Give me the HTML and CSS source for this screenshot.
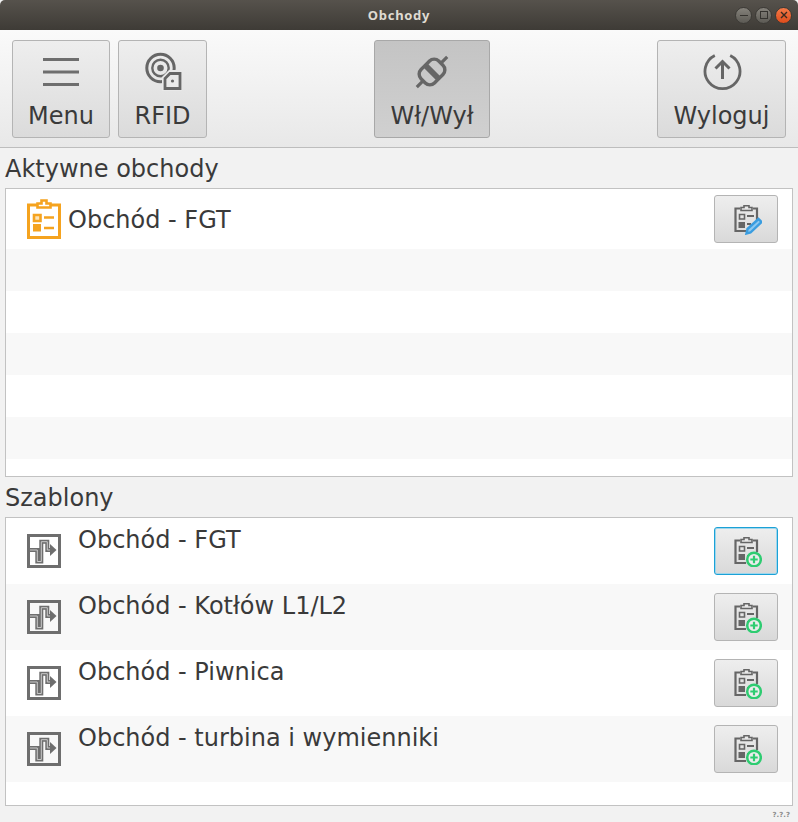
FILE: index.html
```html
<!DOCTYPE html>
<html lang="pl">
<head>
    <meta charset="UTF-8">
    <meta name="viewport" content="width=device-width, initial-scale=1.0">
    <title>Obchody</title>
    <link rel="stylesheet" href="styles.css">
</head>
<body>
    <svg class="sprite" xmlns="http://www.w3.org/2000/svg">
        <symbol id="clipboard" viewBox="0 0 32 32">
            <path d="M10 5.500H5.500V28H16M23 5.500H27V17" fill="none" stroke="#666" stroke-width="2.200"/>
            <path d="M11 7.500V4.500h3V2.800h5V4.500h3V7.500z" fill="none" stroke="#666" stroke-width="1.600"/>
            <path d="M9.500 11.500h5v4.500h-5z" fill="none" stroke="#666" stroke-width="1.600"/>
            <path d="M8.500 19h6.500v6H8.500z" fill="#666"/>
            <path d="M17 13h7M17 21h4" stroke="#666" stroke-width="1.800"/>
        </symbol>
        <symbol id="template" viewBox="0 0 34 34">
            <path d="M1.500 1.500h31v31h-31z" fill="none" stroke="#6e6e6e" stroke-width="3"/>
            <path d="M3 16h7.300v11.500h4V7.700h6V16h4" fill="none" stroke="#6e6e6e" stroke-width="4"/>
            <path d="M3 16h7.300v11.500h4V7.700h6V16h4" fill="none" stroke="#d4d4d4" stroke-width="0.900"/>
            <path d="M23 10L29.500 16 23 22z" fill="#6e6e6e"/>
        </symbol>
    </svg>

    <div class="window">
        <header class="titlebar">
            <span></span>
            <span class="title">Obchody</span>
            <div class="win-buttons">
                <span class="win-btn"><i class="glyph-min"></i></span>
                <span class="win-btn"><i class="glyph-max"></i></span>
                <span class="win-btn win-close">
                    <svg width="10" height="10" viewBox="0 0 10 10"><path d="M2 2l6 6M8 2l-6 6" stroke="#3a2a20" stroke-width="1.400"/></svg>
                </span>
            </div>
        </header>

        <nav class="toolbar">
            <div class="tool-group">
                <button class="tool tool-menu">
                    <svg width="40" height="40" viewBox="0 0 40 40">
                        <path d="M2 7.500h36M2 20h36M2 32.500h36" stroke="#6e6e6e" stroke-width="3"/>
                    </svg>
                    <span>Menu</span>
                </button>
                <button class="tool tool-rfid">
                    <svg width="40" height="40" viewBox="0 0 40 40">
                        <circle cx="17.500" cy="16" r="3.300" fill="#666"/>
                        <circle cx="17.500" cy="16" r="8.200" fill="none" stroke="#666" stroke-width="2.400"/>
                        <circle cx="17.500" cy="16" r="13.700" fill="none" stroke="#666" stroke-width="3"/>
                        <path d="M26 18H39V39H19V25z" fill="#e9e9e9"/>
                        <path d="M27 21.500H37V36.500H22V26.500z" fill="#e9e9e9" stroke="#666" stroke-width="2.800"/>
                        <circle cx="29.500" cy="29" r="1.600" fill="#666"/>
                    </svg>
                    <span>RFID</span>
                </button>
            </div>
            <button class="tool tool-plug tool-on">
                <svg width="40" height="40" viewBox="0 0 40 40">
                    <g transform="rotate(45 20 20)">
                        <path d="M20 -1.500V8M20 32V41.500" stroke="#666" stroke-width="3.200"/>
                        <path d="M10.500 18.800V14a6.500 6.500 0 0 1 6.500-6.500h6a6.500 6.500 0 0 1 6.500 6.500v4.800z" fill="none" stroke="#666" stroke-width="3.400"/>
                        <path d="M10.500 21.200V26a6.500 6.500 0 0 0 6.500 6.500h6a6.500 6.500 0 0 0 6.500-6.500v-4.800z" fill="none" stroke="#666" stroke-width="3.400"/>
                    </g>
                </svg>
                <span>Wł/Wył</span>
            </button>
            <button class="tool tool-logout">
                <svg width="40" height="40" viewBox="0 0 40 40">
                    <path d="M12.800 3.500A17.500 17.500 0 1 0 28.200 3.500" fill="none" stroke="#666" stroke-width="2.800"/>
                    <path d="M20.500 27V10M13.500 16.500l7-7 7 7" fill="none" stroke="#666" stroke-width="3"/>
                </svg>
                <span>Wyloguj</span>
            </button>
        </nav>

        <h2 class="section-label">Aktywne obchody</h2>
        <section class="list">
            <div class="row row-active">
                <svg class="row-icon" width="34" height="40" viewBox="0 0 34 40">
                    <path d="M10 6H1.500V38.500H32.500V6H24" fill="none" stroke="#f5a31f" stroke-width="3"/>
                    <path d="M10.500 8.500V4.500h4V1.500h5V4.500h4V8.500z" fill="#fff" stroke="#f5a31f" stroke-width="2.600"/>
                    <path d="M7 16h6.500v6H7z" fill="#fde3b5" stroke="#f5a31f" stroke-width="2.600"/>
                    <path d="M6 25h8v7.500H6z" fill="#f5a31f"/>
                    <path d="M17 18.500h10M17 29h10" stroke="#f5a31f" stroke-width="2.600"/>
                </svg>
                <span class="row-name">Obchód - FGT</span>
                <button class="row-btn">
                    <svg width="32" height="32" viewBox="0 0 32 32">
                        <use href="#clipboard"/>
                        <path d="M16.500 30.500l1-4.500L28.500 16l3 3-11 10.500z" fill="#8cc8f0" stroke="#3a9de0" stroke-width="2.400"/>
                    </svg>
                </button>
            </div>
            <div class="row-empty"></div>
            <div class="row-empty"></div>
            <div class="row-empty"></div>
            <div class="row-empty"></div>
            <div class="row-empty"></div>
        </section>

        <h2 class="section-label">Szablony</h2>
        <section class="list">
            <div class="row row-template">
                <svg class="row-icon" width="34" height="34"><use href="#template"/></svg>
                <span class="row-name">Obchód - FGT</span>
                <button class="row-btn row-btn-focus">
                    <svg width="32" height="32" viewBox="0 0 32 32">
                        <use href="#clipboard"/>
                        <circle cx="24" cy="24.500" r="6.800" fill="#ececec" stroke="#2ecc71" stroke-width="2.500"/>
                        <path d="M20.300 24.500h7.400M24 20.800v7.400" stroke="#2ecc71" stroke-width="2.200"/>
                    </svg>
                </button>
            </div>
            <div class="row row-template">
                <svg class="row-icon" width="34" height="34"><use href="#template"/></svg>
                <span class="row-name">Obchód - Kotłów L1/L2</span>
                <button class="row-btn">
                    <svg width="32" height="32" viewBox="0 0 32 32">
                        <use href="#clipboard"/>
                        <circle cx="24" cy="24.500" r="6.800" fill="#ececec" stroke="#2ecc71" stroke-width="2.500"/>
                        <path d="M20.300 24.500h7.400M24 20.800v7.400" stroke="#2ecc71" stroke-width="2.200"/>
                    </svg>
                </button>
            </div>
            <div class="row row-template">
                <svg class="row-icon" width="34" height="34"><use href="#template"/></svg>
                <span class="row-name">Obchód - Piwnica</span>
                <button class="row-btn">
                    <svg width="32" height="32" viewBox="0 0 32 32">
                        <use href="#clipboard"/>
                        <circle cx="24" cy="24.500" r="6.800" fill="#ececec" stroke="#2ecc71" stroke-width="2.500"/>
                        <path d="M20.300 24.500h7.400M24 20.800v7.400" stroke="#2ecc71" stroke-width="2.200"/>
                    </svg>
                </button>
            </div>
            <div class="row row-template">
                <svg class="row-icon" width="34" height="34"><use href="#template"/></svg>
                <span class="row-name">Obchód - turbina i wymienniki</span>
                <button class="row-btn">
                    <svg width="32" height="32" viewBox="0 0 32 32">
                        <use href="#clipboard"/>
                        <circle cx="24" cy="24.500" r="6.800" fill="#ececec" stroke="#2ecc71" stroke-width="2.500"/>
                        <path d="M20.300 24.500h7.400M24 20.800v7.400" stroke="#2ecc71" stroke-width="2.200"/>
                    </svg>
                </button>
            </div>
        </section>

        <footer class="statusbar">?.?.?</footer>
    </div>
</body>
</html>
```

FILE: styles.css
```css
/* General */
body {
    margin: 0;
    background: #f2f2f2;
    color: #3a3a3a;
    font-family: "DejaVu Sans", sans-serif;
}

.sprite {
    display: none;
}

.window {
    width: 798px;
    height: 822px;
    display: flex;
    flex-direction: column;
    overflow: hidden;
}

/* Title bar */
.titlebar {
    height: 30px;
    flex: none;
    display: grid;
    grid-template-columns: 1fr auto 1fr;
    align-items: center;
    background: linear-gradient(#56524c, #3e3b36);
    border-radius: 5px 5px 0 0;
}

.title {
    color: #dfdbd2;
    font-family: "Noto Sans", sans-serif;
    font-size: 13px;
    font-weight: bold;
    letter-spacing: 0.7px;
}

.win-buttons {
    display: flex;
    justify-content: flex-end;
    gap: 3px;
    padding-right: 6px;
}

.win-btn {
    width: 17px;
    height: 17px;
    box-sizing: border-box;
    display: flex;
    align-items: center;
    justify-content: center;
    border-radius: 50%;
    border: 1px solid #3c3a36;
    background: linear-gradient(#85827b, #5c5a54);
}

.win-close {
    background: linear-gradient(#f47a48, #de4c1b);
}

.glyph-min {
    width: 8px;
    height: 1px;
    background: #35332f;
}

.glyph-max {
    width: 6px;
    height: 6px;
    border: 1px solid #35332f;
}

/* Toolbar */
.toolbar {
    height: 118px;
    flex: none;
    display: flex;
    justify-content: space-between;
    align-items: flex-start;
    padding: 10px 12px 0;
    box-sizing: border-box;
    background: linear-gradient(#fafafa, #e8e8e8);
    border-bottom: 1px solid #bdbdbd;
}

.tool-group {
    display: flex;
    gap: 8px;
}

.tool {
    height: 98px;
    display: flex;
    flex-direction: column;
    align-items: center;
    padding: 11px 0 0;
    box-sizing: border-box;
    border: 1px solid #b4b4b4;
    border-radius: 3px;
    background: linear-gradient(#eeeeee, #dbdbdb);
    color: #3a3a3a;
    font-family: inherit;
    font-size: 24px;
}

.tool span {
    margin-top: 7px;
    line-height: 34px;
}

.tool-menu {
    width: 98px;
}

.tool-rfid {
    width: 89px;
}

.tool-plug {
    width: 116px;
}

.tool-logout {
    width: 129px;
}

.tool-on {
    background: linear-gradient(#c4c4c4, #d0d0d0);
    border-color: #a8a8a8;
}

/* Lists */
.section-label {
    height: 40px;
    flex: none;
    margin: 0;
    padding-left: 5px;
    font-size: 24px;
    font-weight: normal;
    line-height: 42px;
}

.list {
    height: 289px;
    flex: none;
    margin: 0 5px;
    box-sizing: border-box;
    border: 1px solid #c2c2c2;
    background: #ffffff;
}

.row {
    display: flex;
    align-items: center;
    font-size: 24px;
}

.row-active {
    height: 60px;
    padding: 0 14px 0 21px;
}

.row-template {
    height: 66px;
    padding: 0 14px 0 21px;
}

.row-empty {
    height: 42px;
}

.row-empty:nth-child(even),
.row-template:nth-child(even) {
    background: #f8f8f8;
}

.row-name {
    flex: 1;
    margin-left: 7px;
    line-height: 30px;
}

.row-active .row-name {
    margin-top: 2px;
}

.row-template .row-name {
    margin-left: 17px;
    align-self: flex-start;
    margin-top: 7px;
}

.row-icon {
    flex: none;
}

.row-btn {
    width: 64px;
    height: 48px;
    display: flex;
    align-items: center;
    justify-content: center;
    padding: 0;
    border: 1px solid #b4b4b4;
    border-radius: 3px;
    background: linear-gradient(#eeeeee, #d9d9d9);
}

.row-btn-focus {
    border-color: #1ba1d6;
    box-shadow: inset 0 0 0 1px #9fd6ec;
}

/* Status */
.statusbar {
    flex: 1;
    padding-right: 8px;
    color: #8a8a8a;
    font-size: 7px;
    font-weight: bold;
    line-height: 18px;
    text-align: right;
}
```
